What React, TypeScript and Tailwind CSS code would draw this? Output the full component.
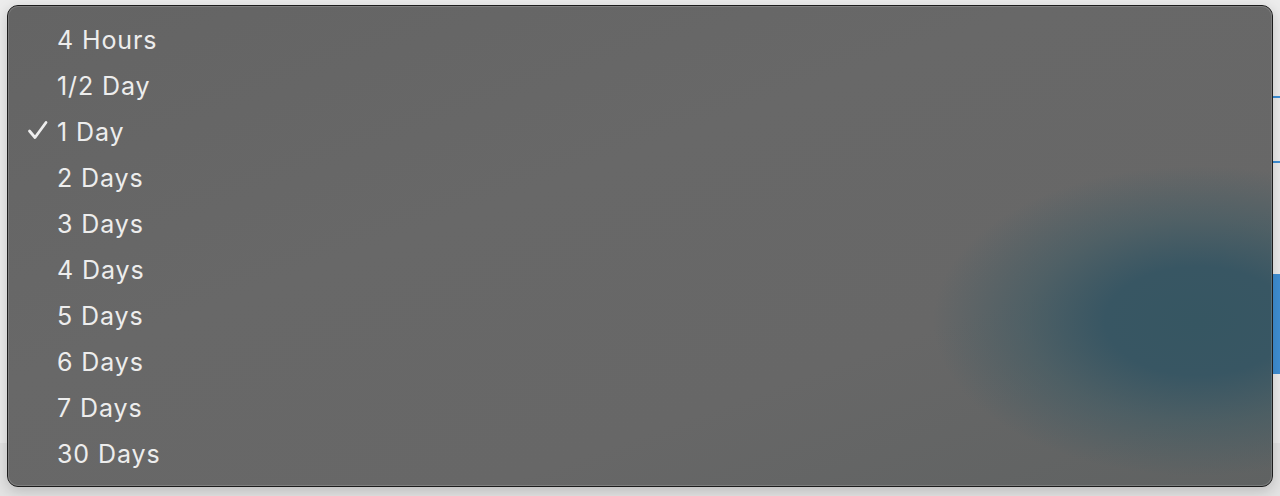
import React from "react";

const items = ["4 Hours", "1/2 Day", "1 Day", "2 Days", "3 Days", "4 Days", "5 Days", "6 Days", "7 Days", "30 Days"];

export default function App() {
  return (
    <div className="relative w-full h-[496px] overflow-hidden bg-[#ececec]" style={{ fontFamily: "Inter, 'Noto Sans', sans-serif" }}>
      <div className="flex flex-col h-full">
        <div className="flex flex-1">
          <div className="flex-1" />
          <div className="w-[7px] flex flex-col">
            <div className="h-[96px]" />
            <div className="h-[2px] bg-[#3d8fd6]" />
            <div className="h-[63px]" />
            <div className="h-[2px] bg-[#3d8fd6]" />
            <div className="h-[111px]" />
            <div className="h-[100px] bg-[#3f8fd4]" />
          </div>
        </div>
        <div className="h-[53px] bg-[#e3e3e3]" />
      </div>

      <div className="absolute left-[7px] top-[5px] w-[1266px] h-[482px] rounded-[11px] border border-[#1c1c1c] bg-[#666666] overflow-hidden shadow-[0_4px_14px_rgba(0,0,0,0.18)]">
        <div className="absolute inset-0 bg-[linear-gradient(160deg,#646464_0%,#686868_40%,#676767_70%,#5f6262_100%)]" />
        <div className="absolute left-[925px] top-[160px] w-[530px] h-[310px] rounded-full bg-[radial-gradient(closest-side,#365662_0%,#385663_35%,rgba(60,90,100,0.55)_65%,rgba(102,102,102,0)_100%)]" />
        <div className="absolute inset-0 rounded-[10px] shadow-[inset_0_0_0_1px_rgba(255,255,255,0.16)]" />
        <div className="relative flex flex-col pt-[12px] pl-[49px]">
          {items.map((t) => (
            <div key={t} className="relative h-[46px] flex items-center text-[25px] leading-none text-[#ededed] tracking-[0.9px]">
              {t === "1 Day" && (
                <svg className="absolute left-[-30px] top-[10px]" width="22" height="22" viewBox="0 0 22 22" fill="none">
                  <path d="M2.5 11 L8 17.5 L19 2.5" stroke="#ededed" strokeWidth="2.8" strokeLinecap="round" strokeLinejoin="round" />
                </svg>
              )}
              <span className="pb-[1px]">{t}</span>
            </div>
          ))}
        </div>
      </div>
    </div>
  );
}
